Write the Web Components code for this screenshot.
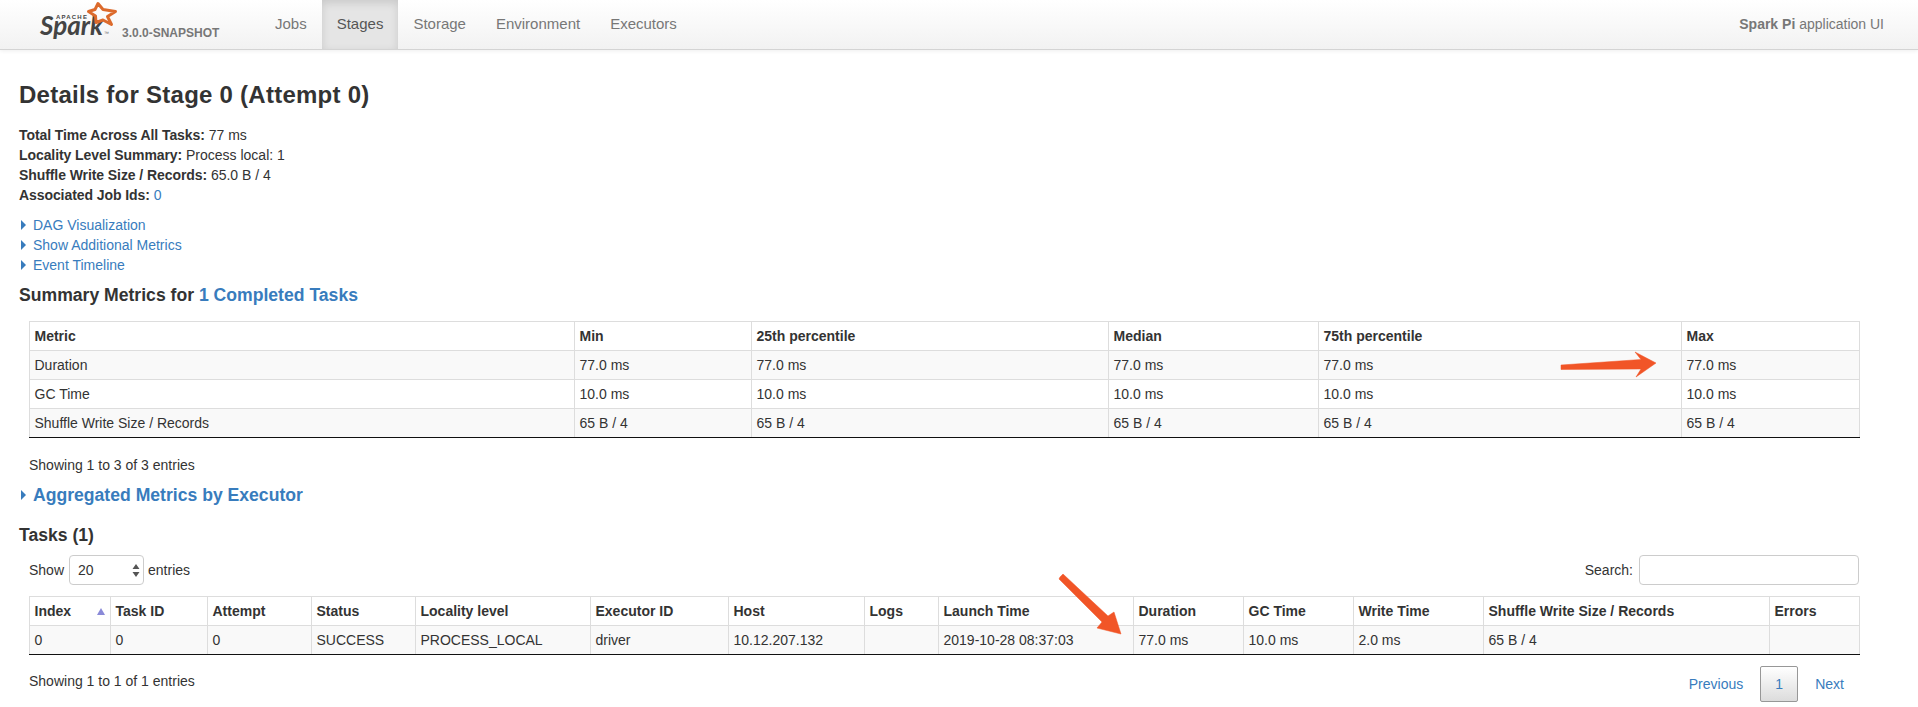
<!DOCTYPE html>
<html>
<head>
<meta charset="utf-8">
<title>Stage 0</title>
<style>
  html, body { margin: 0; padding: 0; background: #fff; }
  body {
    position: relative;
    height: 707px;
    overflow: hidden;
    font-family: "Liberation Sans", Arial, sans-serif;
    font-size: 14px;
    line-height: 20px;
    color: #333;
  }
</style>
</head>
<body>
<app-navbar>
  <nav-item>Jobs</nav-item>
  <nav-item active>Stages</nav-item>
  <nav-item>Storage</nav-item>
  <nav-item>Environment</nav-item>
  <nav-item>Executors</nav-item>
</app-navbar>

<stage-page></stage-page>

<callout-arrow points="1561,365 1641,359.5 1635,352 1656,363 1636,377 1641,369 1561,369.5"></callout-arrow>
<callout-arrow points="1060,577 1063,574 1108,616 1114,612 1121,634 1097,628 1102,622 1059,579"></callout-arrow>

<script>
/**
 * ナビゲーションバー
 */
class AppNavbar extends HTMLElement {
  constructor() {
    super();
    this.attachShadow({ mode: 'open' });
    this.shadowRoot.innerHTML = `
      <style>
        :host {
          display: flex;
          height: 49px;
          border-bottom: 1px solid #d4d4d4;
          background: linear-gradient(to bottom, #ffffff, #f2f2f2);
          box-shadow: 0 1px 4px rgba(0, 0, 0, .07);
          color: #777;
        }
        #brand { position: relative; width: 260px; flex: none; }
        #word {
          position: absolute; left: 40px; top: 6px;
          font: italic 700 26px/38px Lato, sans-serif;
          color: #444;
        }
        #apache {
          position: absolute; left: 56px; top: 14px;
          font: 700 6px/6px "Liberation Sans", sans-serif;
          letter-spacing: 1.2px;
          color: #444;
        }
        #tm {
          position: absolute; left: 104px; top: 31px;
          font: 400 5px/5px "Liberation Sans", sans-serif;
          color: #666;
        }
        #star { position: absolute; left: 86px; top: 0; }
        #version {
          position: absolute; left: 122px; top: 24px;
          font: 700 12px/18px "Liberation Sans", sans-serif;
          color: #777;
        }
        #tabs { display: flex; flex: 1; }
        #app {
          padding: 14px 34px 0 0;
          font-size: 14px;
        }
      </style>
      <div id="brand">
        <span id="apache">APACHE</span>
        <span id="word">Spark</span>
        <span id="tm">™</span>
        <svg id="star" width="32" height="27" viewBox="86 0 32 27">
          <polygon points="98,3.5 103,9.5 115.5,11.5 107.5,16.5 111.5,24.5 103,20 96,22.5 95.5,16 88.5,11.5 95,9.5"
            fill="none" stroke="#dc6a2c" stroke-width="3" stroke-linejoin="round"/>
        </svg>
        <span id="version">3.0.0-SNAPSHOT</span>
      </div>
      <div id="tabs"><slot></slot></div>
      <div id="app"><strong>Spark Pi</strong> application UI</div>
    `;
  }
}

/**
 * ナビゲーションのタブ
 */
class NavItem extends HTMLElement {
  constructor() {
    super();
    this.attachShadow({ mode: 'open' });
    this.shadowRoot.innerHTML = `
      <style>
        :host {
          display: block;
          padding: 14px 15px 0;
          height: 35px;
          font-size: 15px;
          color: #777;
        }
        :host([active]) {
          background: #e5e5e5;
          box-shadow: inset 0 3px 8px rgba(0, 0, 0, .125);
          color: #555;
        }
      </style>
      <slot></slot>
    `;
  }
}

/**
 * 「ラベル: 値」の1行
 */
class SummaryLine extends HTMLElement {
  constructor() {
    super();
    this.attachShadow({ mode: 'open' });
    this.shadowRoot.innerHTML = `
      <style>
        :host { display: block; font-size: 14px; line-height: 20px; }
        b { font-weight: 700; letter-spacing: -.08px; }
      </style>
      <b></b> <slot></slot>
    `;
  }

  connectedCallback() {
    this.shadowRoot.querySelector('b').textContent = this.getAttribute('label');
  }
}

/**
 * 三角つきの開閉リンク
 */
class ExpandLink extends HTMLElement {
  constructor() {
    super();
    this.attachShadow({ mode: 'open' });
    this.shadowRoot.innerHTML = `
      <style>
        :host {
          display: flex;
          align-items: center;
          height: 20px;
          color: #387cbd;
          font-size: 14px;
        }
        :host([big]) { font-size: 17.6px; font-weight: 700; }
        i {
          width: 0; height: 0;
          margin: 0 7px 0 2px;
          border-left: 5px solid #387cbd;
          border-top: 5px solid transparent;
          border-bottom: 5px solid transparent;
        }
      </style>
      <i></i><slot></slot>
    `;
  }
}

/**
 * テーブル表示用クラス
 */
class DataTable extends HTMLElement {
  constructor() {
    super();
    this.attachShadow({ mode: 'open' });
  }

  set config(c) {
    const cols = c.widths.map(w => `<col style="width:${w}px">`).join('');
    const head = c.headers.map((h, i) => {
      const sort = c.sorted === i ? '<i></i>' : '';
      return `<th>${h}${sort}</th>`;
    }).join('');
    const body = c.rows.map(r =>
      `<tr>${r.map(v => `<td>${v}</td>`).join('')}</tr>`).join('');
    this.shadowRoot.innerHTML = `
      <style>
        :host { display: block; }
        table {
          table-layout: fixed;
          border-collapse: collapse;
          width: 1830px;
          font-size: 14px;
          line-height: 20px;
        }
        th, td {
          border: 1px solid #ddd;
          padding: 4px 5px 4px 4.5px;
          height: 20px;
          text-align: left;
          white-space: nowrap;
          overflow: hidden;
        }
        th { position: relative; font-weight: 700; }
        tbody tr:nth-child(odd) td { background: #f9f9f9; }
        tbody tr:last-child td { border-bottom: 1px solid #111; }
        i {
          position: absolute; right: 5px; top: 11px;
          width: 0; height: 0;
          border-left: 4px solid transparent;
          border-right: 4px solid transparent;
          border-bottom: 7px solid #8a8ad8;
        }
      </style>
      <table><colgroup>${cols}</colgroup><thead><tr>${head}</tr></thead><tbody>${body}</tbody></table>
    `;
  }
}

/**
 * Show entries と Search の行
 */
class TableToolbar extends HTMLElement {
  constructor() {
    super();
    this.attachShadow({ mode: 'open' });
    this.shadowRoot.innerHTML = `
      <style>
        :host {
          display: flex;
          justify-content: space-between;
          align-items: center;
          height: 30px;
          font-size: 14px;
        }
        .side { display: flex; align-items: center; }
        #select {
          box-sizing: border-box;
          display: flex;
          align-items: center;
          justify-content: space-between;
          width: 75px; height: 30px;
          margin: 0 4px 0 5px;
          padding: 0 3px 0 8px;
          border: 1px solid #ccc;
          border-radius: 4px;
          background: #fff;
        }
        input {
          box-sizing: border-box;
          width: 220px; height: 30px;
          border: 1px solid #ccc;
          border-radius: 4px;
          background: #fff;
          margin: 0 0 0 6px;
        }
      </style>
      <div class="side">
        <span>Show</span>
        <div id="select">
          <span>20</span>
          <svg width="8" height="13" viewBox="0 0 8 13"><path d="M4 0 L7.5 5 H0.5 Z M4 13 L0.5 8 H7.5 Z" fill="#555"/></svg>
        </div>
        <span>entries</span>
      </div>
      <div class="side">
        <span>Search:</span>
        <input type="text">
      </div>
    `;
  }
}

/**
 * Showing 行とページ送り
 */
class TableFooter extends HTMLElement {
  constructor() {
    super();
    this.attachShadow({ mode: 'open' });
    this.shadowRoot.innerHTML = `
      <style>
        :host {
          display: flex;
          justify-content: space-between;
          align-items: flex-start;
          font-size: 14px;
        }
        #info { margin-top: 5px; }
        #pages {
          display: flex;
          align-items: center;
          height: 36px;
          margin-right: 15px;
          color: #387cbd;
        }
        #current {
          box-sizing: border-box;
          width: 38px; height: 36px;
          margin: 0 17px;
          display: flex;
          align-items: center;
          justify-content: center;
          border: 1px solid #979797;
          border-radius: 2px;
          background: linear-gradient(to bottom, #ffffff, #dcdcdc);
        }
      </style>
      <div id="info"><slot></slot></div>
      <div id="pages"><span>Previous</span><span id="current">1</span><span>Next</span></div>
    `;
  }
}

/**
 * 画面の上に重ねる矢印
 */
class CalloutArrow extends HTMLElement {
  constructor() {
    super();
    this.attachShadow({ mode: 'open' });
    this.shadowRoot.innerHTML = `
      <style>
        :host { position: absolute; left: 0; top: 0; pointer-events: none; }
        svg { display: block; }
      </style>
      <svg width="1918" height="707" viewBox="0 0 1918 707">
        <polygon fill="#f15527" stroke="#f15527" stroke-width=".5" stroke-linejoin="round"></polygon>
      </svg>
    `;
  }

  connectedCallback() {
    this.shadowRoot.querySelector('polygon').setAttribute('points', this.getAttribute('points'));
  }
}

/**
 * ステージ詳細ページ
 */
class StagePage extends HTMLElement {
  constructor() {
    super();
    this.attachShadow({ mode: 'open' });
    this.shadowRoot.innerHTML = `
      <style>
        :host { display: block; padding: 30px 59px 0 19px; }
        h3 { margin: 0 0 15px; font-size: 24px; line-height: 30px; font-weight: 700; letter-spacing: .25px; }
        h4 { margin: 10px 0 16px; font-size: 17.6px; line-height: 20px; font-weight: 700; }
        a { color: #387cbd; text-decoration: none; }
        .links { margin-top: 10px; }
        .inner { margin-left: 10px; }
        #entries { margin: 17px 0 0 10px; font-size: 14px; line-height: 20px; }
        #aggregated { margin-top: 10px; }
        #tasks { margin: 20px 0 10px; }
        #taskTable { margin-top: 11px; }
        table-footer { margin-top: 11px; }
      </style>
      <h3>Details for Stage 0 (Attempt 0)</h3>
      <summary-line label="Total Time Across All Tasks:">77 ms</summary-line>
      <summary-line label="Locality Level Summary:">Process local: 1</summary-line>
      <summary-line label="Shuffle Write Size / Records:">65.0 B / 4</summary-line>
      <summary-line label="Associated Job Ids:"><a>0</a></summary-line>
      <div class="links">
        <expand-link>DAG Visualization</expand-link>
        <expand-link>Show Additional Metrics</expand-link>
        <expand-link>Event Timeline</expand-link>
      </div>
      <h4>Summary Metrics for <a>1 Completed Tasks</a></h4>
      <data-table class="inner" id="metrics"></data-table>
      <div id="entries">Showing 1 to 3 of 3 entries</div>
      <expand-link big id="aggregated">Aggregated Metrics by Executor</expand-link>
      <h4 id="tasks">Tasks (1)</h4>
      <table-toolbar class="inner"></table-toolbar>
      <data-table class="inner" id="taskTable"></data-table>
      <table-footer class="inner">Showing 1 to 1 of 1 entries</table-footer>
    `;
    this.shadowRoot.getElementById('metrics').config = {
      widths: [545, 177, 357, 210, 363, 178],
      headers: ['Metric', 'Min', '25th percentile', 'Median', '75th percentile', 'Max'],
      rows: [
        ['Duration', '77.0 ms', '77.0 ms', '77.0 ms', '77.0 ms', '77.0 ms'],
        ['GC Time', '10.0 ms', '10.0 ms', '10.0 ms', '10.0 ms', '10.0 ms'],
        ['Shuffle Write Size / Records', '65 B / 4', '65 B / 4', '65 B / 4', '65 B / 4', '65 B / 4'],
      ],
    };
    this.shadowRoot.getElementById('taskTable').config = {
      widths: [81, 97, 104, 104, 175, 138, 136, 74, 195, 110, 110, 130, 286, 90],
      headers: ['Index', 'Task ID', 'Attempt', 'Status', 'Locality level', 'Executor ID', 'Host', 'Logs',
        'Launch Time', 'Duration', 'GC Time', 'Write Time', 'Shuffle Write Size / Records', 'Errors'],
      sorted: 0,
      rows: [
        ['0', '0', '0', 'SUCCESS', 'PROCESS_LOCAL', 'driver', '10.12.207.132', '',
          '2019-10-28 08:37:03', '77.0 ms', '10.0 ms', '2.0 ms', '65 B / 4', ''],
      ],
    };
  }
}

customElements.define('app-navbar', AppNavbar);
customElements.define('nav-item', NavItem);
customElements.define('summary-line', SummaryLine);
customElements.define('expand-link', ExpandLink);
customElements.define('data-table', DataTable);
customElements.define('table-toolbar', TableToolbar);
customElements.define('table-footer', TableFooter);
customElements.define('callout-arrow', CalloutArrow);
customElements.define('stage-page', StagePage);
</script>
</body>
</html>
